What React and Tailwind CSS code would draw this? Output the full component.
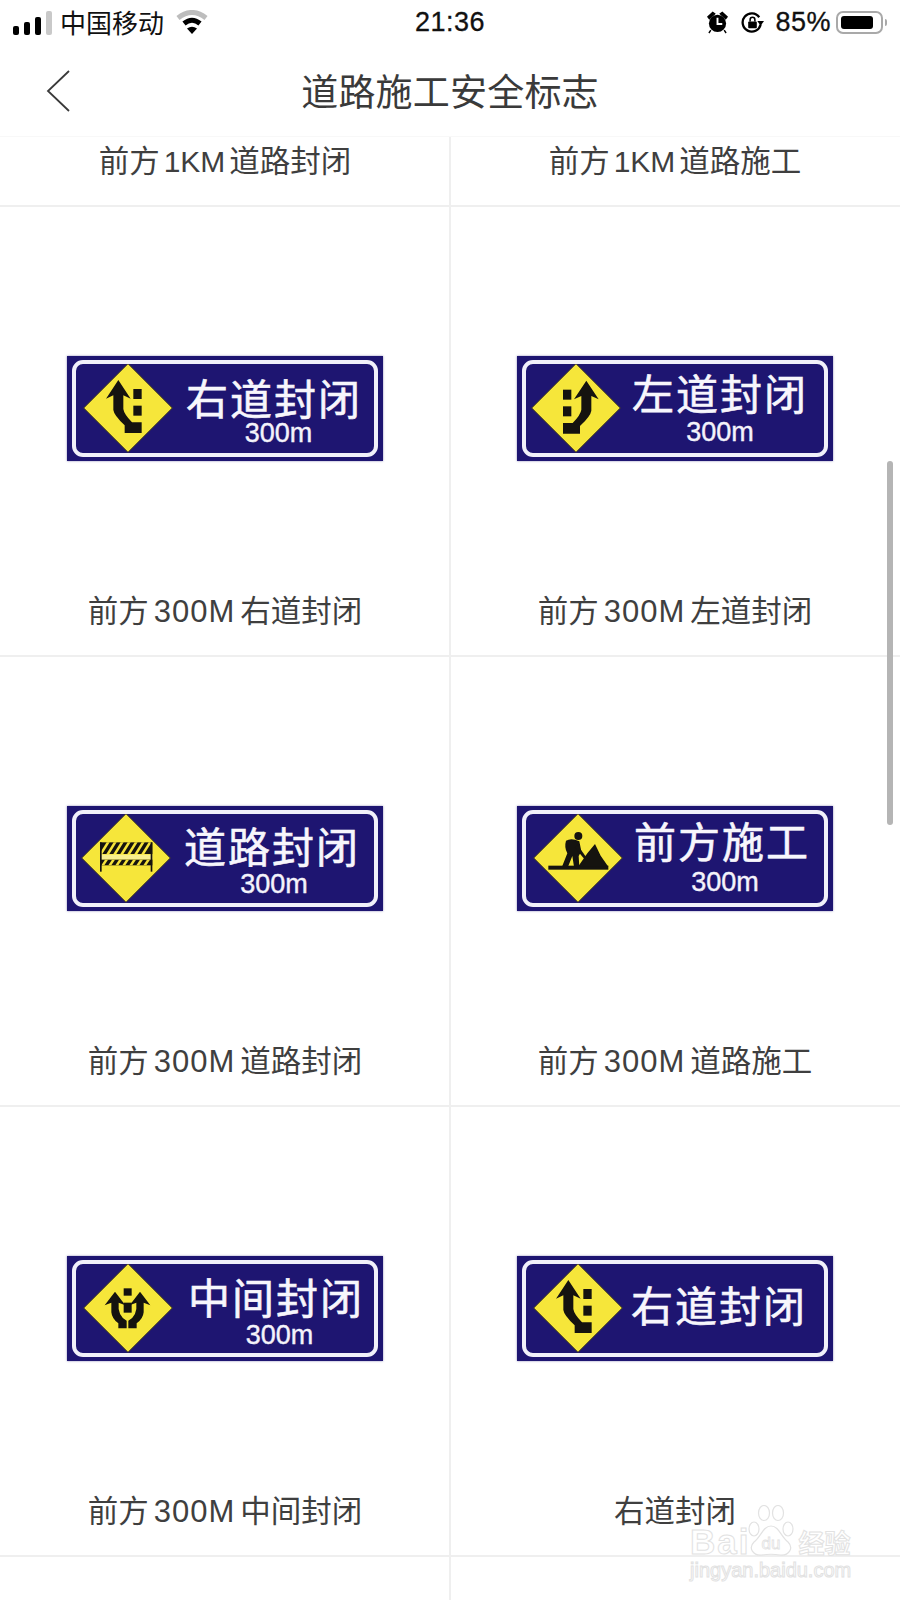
import React from "react";

const cjk = { fontFamily: '"Noto Sans CJK SC", "Noto Sans", sans-serif' };
const DARK = "#15130f";

function Arrow() {
  return (
    <g fill={DARK}>
      <path d="M103 48 L66 104 L88 94 L88 138 Q90 154 122 184 L122 207 L173 207 L173 175 L144 175 Q120 150 118 135 L118 94 L140 104 Z" />
      <rect x="148" y="75" width="25" height="30" />
      <rect x="148" y="125" width="25" height="30" />
    </g>
  );
}

function Barrier() {
  const top = [0, 1, 2, 3, 4, 5, 6];
  return (
    <g>
      <rect x="54" y="85" width="157" height="35" fill={DARK} />
      {top.map((i) => (
        <path key={i} d={`M${52 + i * 21} 120 L${74 + i * 21} 85 L${83 + i * 21} 85 L${61 + i * 21} 120 Z`} fill="#f5e33a" />
      ))}
      <rect x="54" y="122" width="157" height="15" fill="#f8ef8f" />
      <rect x="54" y="137" width="157" height="17" fill={DARK} />
      {top.map((i) => (
        <path key={i} d={`M${58 + i * 21} 154 L${69 + i * 21} 137 L${78 + i * 21} 137 L${67 + i * 21} 154 Z`} fill="#f5e33a" />
      ))}
      <rect x="54" y="85" width="5" height="88" fill={DARK} />
      <rect x="206" y="85" width="5" height="88" fill={DARK} />
    </g>
  );
}

function Worker() {
  return (
    <g fill={DARK}>
      <rect x="43" y="155" width="180" height="12" />
      <path d="M132 158 L160 118 L183 90 L200 125 L223 158 Z" />
      <circle cx="133" cy="66" r="12" />
      <path d="M96 80 Q112 70 136 82 L142 112 L134 126 L136 158 L120 158 L115 126 L102 158 L84 158 L100 118 Q90 100 96 80 Z" />
      <path d="M130 92 L160 134 L154 139 L122 100 Z" />
    </g>
  );
}

function Middle() {
  return (
    <g fill={DARK}>
      <rect x="119" y="73" width="24" height="22" />
      <rect x="119" y="116" width="24" height="30" />
      <path d="M93 83 L62 124 L82 116 L82 145 Q84 165 103 178 L103 193 L128 193 L128 170 Q100 155 104 116 L124 124 Z" />
      <path d="M168 83 L199 124 L179 116 L179 145 Q177 165 158 178 L158 193 L133 193 L133 170 Q161 155 157 116 L137 124 Z" />
    </g>
  );
}

function Diamond({ icon, className }) {
  return (
    <svg viewBox="0 0 264 264" className={`w-[88px] h-[88px] shrink-0 overflow-visible ${className}`}>
      <path d="M132 -1 L265 132 L132 265 L-1 132 Z" fill="#f6e63a" stroke="#3a3420" strokeWidth="3" />
      {icon === "right" && <Arrow />}
      {icon === "left" && (
        <g transform="translate(266,2) scale(-1,1)">
          <Arrow />
        </g>
      )}
      {icon === "barrier" && <Barrier />}
      {icon === "worker" && <Worker />}
      {icon === "middle" && <Middle />}
    </svg>
  );
}

function Sign({ icon, title, dist = true, diamond, col, distClass }) {
  return (
    <div className="w-[316px] h-[105px] bg-[#1e1571] px-[5px] py-[4px] shadow-[0_0_2px_rgba(30,20,112,0.5)]">
      <div className="h-full border-[4px] border-[#f1f0fa] rounded-[11px] flex items-start overflow-hidden" style={cjk}>
        <Diamond icon={icon} className={diamond} />
        <div className={`flex flex-col items-center ${col}`}>
          <div className="text-[#f7f6fc] text-[42px] leading-[44px] tracking-[2px] whitespace-nowrap [-webkit-text-stroke:0.6px_#f7f6fc]">{title}</div>
          {dist && (
            <div className={`text-[#f4f3fb] text-[27px] leading-[26px] whitespace-nowrap font-['Liberation_Sans',sans-serif] [-webkit-text-stroke:0.4px_#f4f3fb] ${distClass}`}>300m</div>
          )}
        </div>
      </div>
    </div>
  );
}

const RIGHT_LINE = "shadow-[inset_-1px_0_0_#efefef,1px_0_0_#efefef]";

function Cell({ sign, children, right }) {
  return (
    <div className={`h-[450px] border-b-2 border-[#efefef] flex flex-col items-center pt-[149px] ${right ? "" : RIGHT_LINE}`}>
      {sign}
      <Label>{children}</Label>
    </div>
  );
}

function Label({ children, className = "mt-[126px]" }) {
  return (
    <div className={`text-[30.5px] leading-[44px] text-[#3f3f3f] whitespace-nowrap ${className}`} style={cjk}>
      {children}
    </div>
  );
}

const Num = () => <span className="mx-[5px] text-[31px] tracking-[1px] font-['Liberation_Sans',sans-serif]">300M</span>;
const Km = () => <span className="mx-[4px] text-[30px] font-['Liberation_Sans',sans-serif]">1KM</span>;

function StatusBar() {
  return (
    <div className="h-[44px] flex items-center text-[#111] relative">
      <div className="flex items-end gap-[5px] ml-[13px] h-[24px] mt-[1px]">
        <span className="w-[6px] h-[9px] rounded-[2px] bg-black" />
        <span className="w-[6px] h-[13px] rounded-[2px] bg-black" />
        <span className="w-[6px] h-[18px] rounded-[2px] bg-black" />
        <span className="w-[6px] h-[24px] rounded-[2px] bg-[#c9c9c9]" />
      </div>
      <div className="ml-[8px] text-[26px] leading-[42px] whitespace-nowrap" style={cjk}>中国移动</div>
      <svg viewBox="0 0 32 24" className="w-[32px] h-[24px] ml-[12px]">
        <path d="M2 8 Q16 -3 30 8" fill="none" stroke="#bdbdbd" strokeWidth="5" />
        <path d="M8 13.5 Q16 7 24 13.5" fill="none" stroke="#000" strokeWidth="5" />
        <path d="M11 18.5 Q16 15 21 18.5 L16 24 Z" fill="#000" />
      </svg>
      <div className="absolute left-[415px] top-[1px] text-[27px] leading-[42px] tracking-[0.5px] font-['Liberation_Sans',sans-serif] [-webkit-text-stroke:0.3px_#111]">21:36</div>
      <div className="ml-auto flex items-center mr-[13px]">
        <svg viewBox="0 0 22 24" className="w-[21px] h-[23px]">
          <circle cx="11" cy="13" r="9" fill="#000" />
          <path d="M11 7 V13.5 H16" fill="none" stroke="#fff" strokeWidth="2" />
          <path d="M1 6 L6 1.5 L8 3 L2.5 8 Z M21 6 L16 1.5 L14 3 L19.5 8 Z M4 20 L2 23 M18 20 L20 23" fill="#000" stroke="#000" strokeWidth="1.5" />
        </svg>
        <svg viewBox="0 0 24 24" className="w-[23px] h-[23px] ml-[13px]">
          <path d="M20.5 14 A9.5 9.5 0 1 1 19 6.5" fill="none" stroke="#000" strokeWidth="2.4" />
          <path d="M17 10.5 L24 10.5 L20.5 15.5 Z" fill="#000" />
          <rect x="7.5" y="11" width="9" height="7" rx="1" fill="#000" />
          <path d="M9.5 11 V9 A2.5 2.5 0 0 1 14.5 9 V11" fill="none" stroke="#000" strokeWidth="1.6" />
        </svg>
        <div className="ml-[11px] text-[27px] leading-[42px] tracking-[0.5px] font-['Liberation_Sans',sans-serif] [-webkit-text-stroke:0.3px_#111]">85%</div>
        <div className="ml-[5px] w-[47px] h-[23px] rounded-[7px] border-2 border-[#a9a9a9] p-[3px]">
          <div className="w-[32px] h-full rounded-[3px] bg-black" />
        </div>
        <div className="w-[2px] h-[7px] bg-[#a9a9a9] ml-[2px] rounded-r-[2px]" />
      </div>
    </div>
  );
}

function Header() {
  return (
    <div className="h-[93px] flex items-center justify-center relative border-b border-[#f8f8f8]">
      <svg viewBox="0 0 24 42" className="w-[24px] h-[42px] absolute left-[46px] top-[26px]">
        <path d="M23 1 L2 21 L23 41" fill="none" stroke="#3a3a3a" strokeWidth="1.8" />
      </svg>
      <div className="text-[37px] leading-[48px] text-[#3a3a3a] tracking-[0.2px]" style={cjk}>道路施工安全标志</div>
    </div>
  );
}

function Watermark() {
  const out = "text-white [-webkit-text-stroke:1px_#e2e2e2] font-['Liberation_Sans',sans-serif] whitespace-nowrap";
  return (
    <div className="absolute left-[690px] top-[1503px] w-[162px] flex flex-col items-start pointer-events-none">
      <div className="flex items-end h-[54px]">
        <span className={`${out} text-[35px] leading-[30px] font-bold tracking-[2px]`}>Bai</span>
        <svg viewBox="0 0 48 52" className="w-[48px] h-[52px] -ml-[3px]">
          <g fill="#fff" stroke="#e2e2e2" strokeWidth="1.2">
            <ellipse cx="7" cy="24" rx="5" ry="7" />
            <ellipse cx="17" cy="8" rx="5.5" ry="7.5" />
            <ellipse cx="31" cy="8" rx="5.5" ry="7.5" />
            <ellipse cx="41" cy="24" rx="5" ry="7" />
            <path d="M24 21 C32 21 34 32 41 37 C47 43 42 51 33 50 C27 49 21 49 15 50 C6 51 1 43 7 37 C14 32 16 21 24 21 Z" />
          </g>
          <text x="24" y="44" textAnchor="middle" fontSize="17" fontFamily="Liberation Sans" fill="#fff" stroke="#e2e2e2" strokeWidth="0.8">du</text>
        </svg>
        <span className={`${out} text-[26px] leading-[30px] ml-[3px] font-bold`} style={cjk}>经验</span>
      </div>
      <div className={`${out} text-[20px] leading-[24px] mt-[1px]`}>jingyan.baidu.com</div>
    </div>
  );
}

export default function App() {
  return (
    <div className="w-[900px] h-[1600px] bg-white relative overflow-hidden">
      <StatusBar />
      <Header />
      <div className="grid grid-cols-2">
        <div className={`h-[70px] border-b-2 border-[#efefef] flex justify-center ${RIGHT_LINE}`}>
          <Label className="mt-0">前方<Km />道路封闭</Label>
        </div>
        <div className="h-[70px] border-b-2 border-[#efefef] flex justify-center">
          <Label className="mt-0">前方<Km />道路施工</Label>
        </div>

        <Cell sign={<Sign icon="right" title="右道封闭" diamond="ml-[8px]" col="ml-[14px] mt-[11px]" distClass="mt-[1px] ml-[9px]" />}>前方<Num />右道封闭</Cell>
        <Cell right sign={<Sign icon="left" title="左道封闭" diamond="ml-[6px]" col="ml-[12px] mt-[6px]" distClass="mt-[5px]" />}>前方<Num />左道封闭</Cell>

        <Cell sign={<Sign icon="barrier" title="道路封闭" diamond="ml-[6px]" col="ml-[14px] mt-[9px]" distClass="mt-[4px] ml-[4px]" />}>前方<Num />道路封闭</Cell>
        <Cell right sign={<Sign icon="worker" title="前方施工" diamond="ml-[8px]" col="ml-[12px] mt-[4px]" distClass="mt-[7px] ml-[6px]" />}>前方<Num />道路施工</Cell>

        <Cell sign={<Sign icon="middle" title="中间封闭" diamond="ml-[8px]" col="ml-[16px] mt-[10px]" distClass="mt-[4px] ml-[7px]" />}>前方<Num />中间封闭</Cell>
        <Cell right sign={<Sign icon="right" title="右道封闭" dist={false} diamond="ml-[8px]" col="ml-[9px] mt-[18px]" />}>右道封闭</Cell>

        <div className={`h-[44px] ${RIGHT_LINE}`} />
        <div className="h-[44px]" />
      </div>
      <div className="absolute left-[887px] top-[461px] w-[6px] h-[364px] rounded-full bg-[#b5b5b5]" />
      <Watermark />
    </div>
  );
}
